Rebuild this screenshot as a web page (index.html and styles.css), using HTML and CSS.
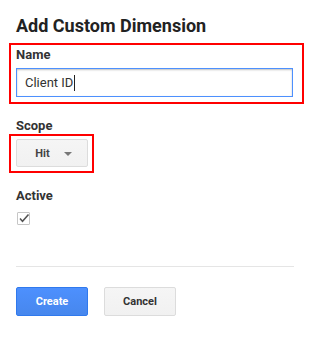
FILE: index.html
```html
<!DOCTYPE html>
<html lang="en">
<head>
    <meta charset="UTF-8">
    <title>Add Custom Dimension</title>
    <link rel="stylesheet" href="styles.css">
</head>
<body>
    <div class="dialog">
        <h1 class="dialog-title">Add Custom Dimension</h1>

        <div class="field mark mark-name">
            <div class="field-label">Name</div>
            <div class="text-input">Client ID<span class="caret"></span></div>
        </div>

        <div class="field field-scope">
            <div class="field-label">Scope</div>
            <div class="mark mark-scope">
                <button class="select-btn">Hit <span class="arrow"></span></button>
            </div>
        </div>

        <div class="field field-active">
            <div class="field-label">Active</div>
            <span class="checkbox">
                <svg width="13" height="13" viewBox="0 0 13 13"><path d="M3 6.5 L5.5 9.2 L11.5 2.5" fill="none" stroke="#555" stroke-width="1.6"/></svg>
            </span>
        </div>

        <hr class="divider">

        <div class="actions">
            <button class="btn btn-primary">Create</button>
            <button class="btn">Cancel</button>
        </div>
    </div>
</body>
</html>
```

FILE: styles.css
```css
* { box-sizing: border-box; font-family: 'Roboto', 'Liberation Sans', sans-serif; }

body { margin: 0; background: #fff; color: #222; }

.dialog { padding: 14px 16px 0; width: 310px; }
.dialog-title { margin: 0 0 5px; font-size: 18px; line-height: 24px; font-weight: 700; color: #222; }

/* CAMPOS */
.field-label { font-size: 13px; line-height: 16px; font-weight: 700; color: #333; }
.field-scope { margin-top: 14px; }
.field-active { margin-top: 15px; }
.field-active .field-label { margin-bottom: 8px; }

/* DESTAQUE VERMELHO */
.mark { border: 2px solid #f00; }
.mark-name { margin-left: -7px; width: 295px; padding: 2px 9px 5px 5px; }
.mark-name .field-label { margin-bottom: 5px; }
.mark-scope { margin-left: -7px; width: 85px; padding: 3px 4px 4px 5px; }

.text-input { height: 29px; border: 1px solid #4d90fe; box-shadow: inset 0 1px 2px rgba(0,0,0,0.25); padding: 0 8px; font-size: 13px; line-height: 27px; color: #333; display: flex; align-items: center; }
.caret { display: inline-block; width: 1px; height: 16px; background: #222; margin-left: 1px; }

.select-btn { width: 72px; height: 28px; border: 1px solid #dcdcdc; border-radius: 2px; background: linear-gradient(#f5f5f5, #f1f1f1); color: #444; font-size: 11px; font-weight: 700; display: flex; align-items: center; justify-content: center; gap: 14px; padding: 0 0 0 3px; }
.arrow { width: 0; height: 0; border-left: 4px solid transparent; border-right: 4px solid transparent; border-top: 4px solid #777; margin-top: 1px; }

.checkbox { display: block; width: 13px; height: 13px; margin-left: 1px; border: 1px solid #c6c6c6; border-radius: 1px; position: relative; }
.checkbox svg { position: absolute; left: -1px; top: -1px; }

.divider { margin: 41px 0 0; border: 0; border-top: 1px solid #e5e5e5; width: 278px; }

/* BOTOES */
.actions { display: flex; gap: 16px; margin-top: 20px; }
.btn { width: 72px; height: 29px; border-radius: 2px; border: 1px solid #dcdcdc; background: linear-gradient(#f5f5f5, #f1f1f1); color: #333; font-size: 11px; font-weight: 700; cursor: pointer; }
.btn-primary { background: linear-gradient(#4d90fe, #4787ed); border-color: #3079ed; color: #fff; }
```
